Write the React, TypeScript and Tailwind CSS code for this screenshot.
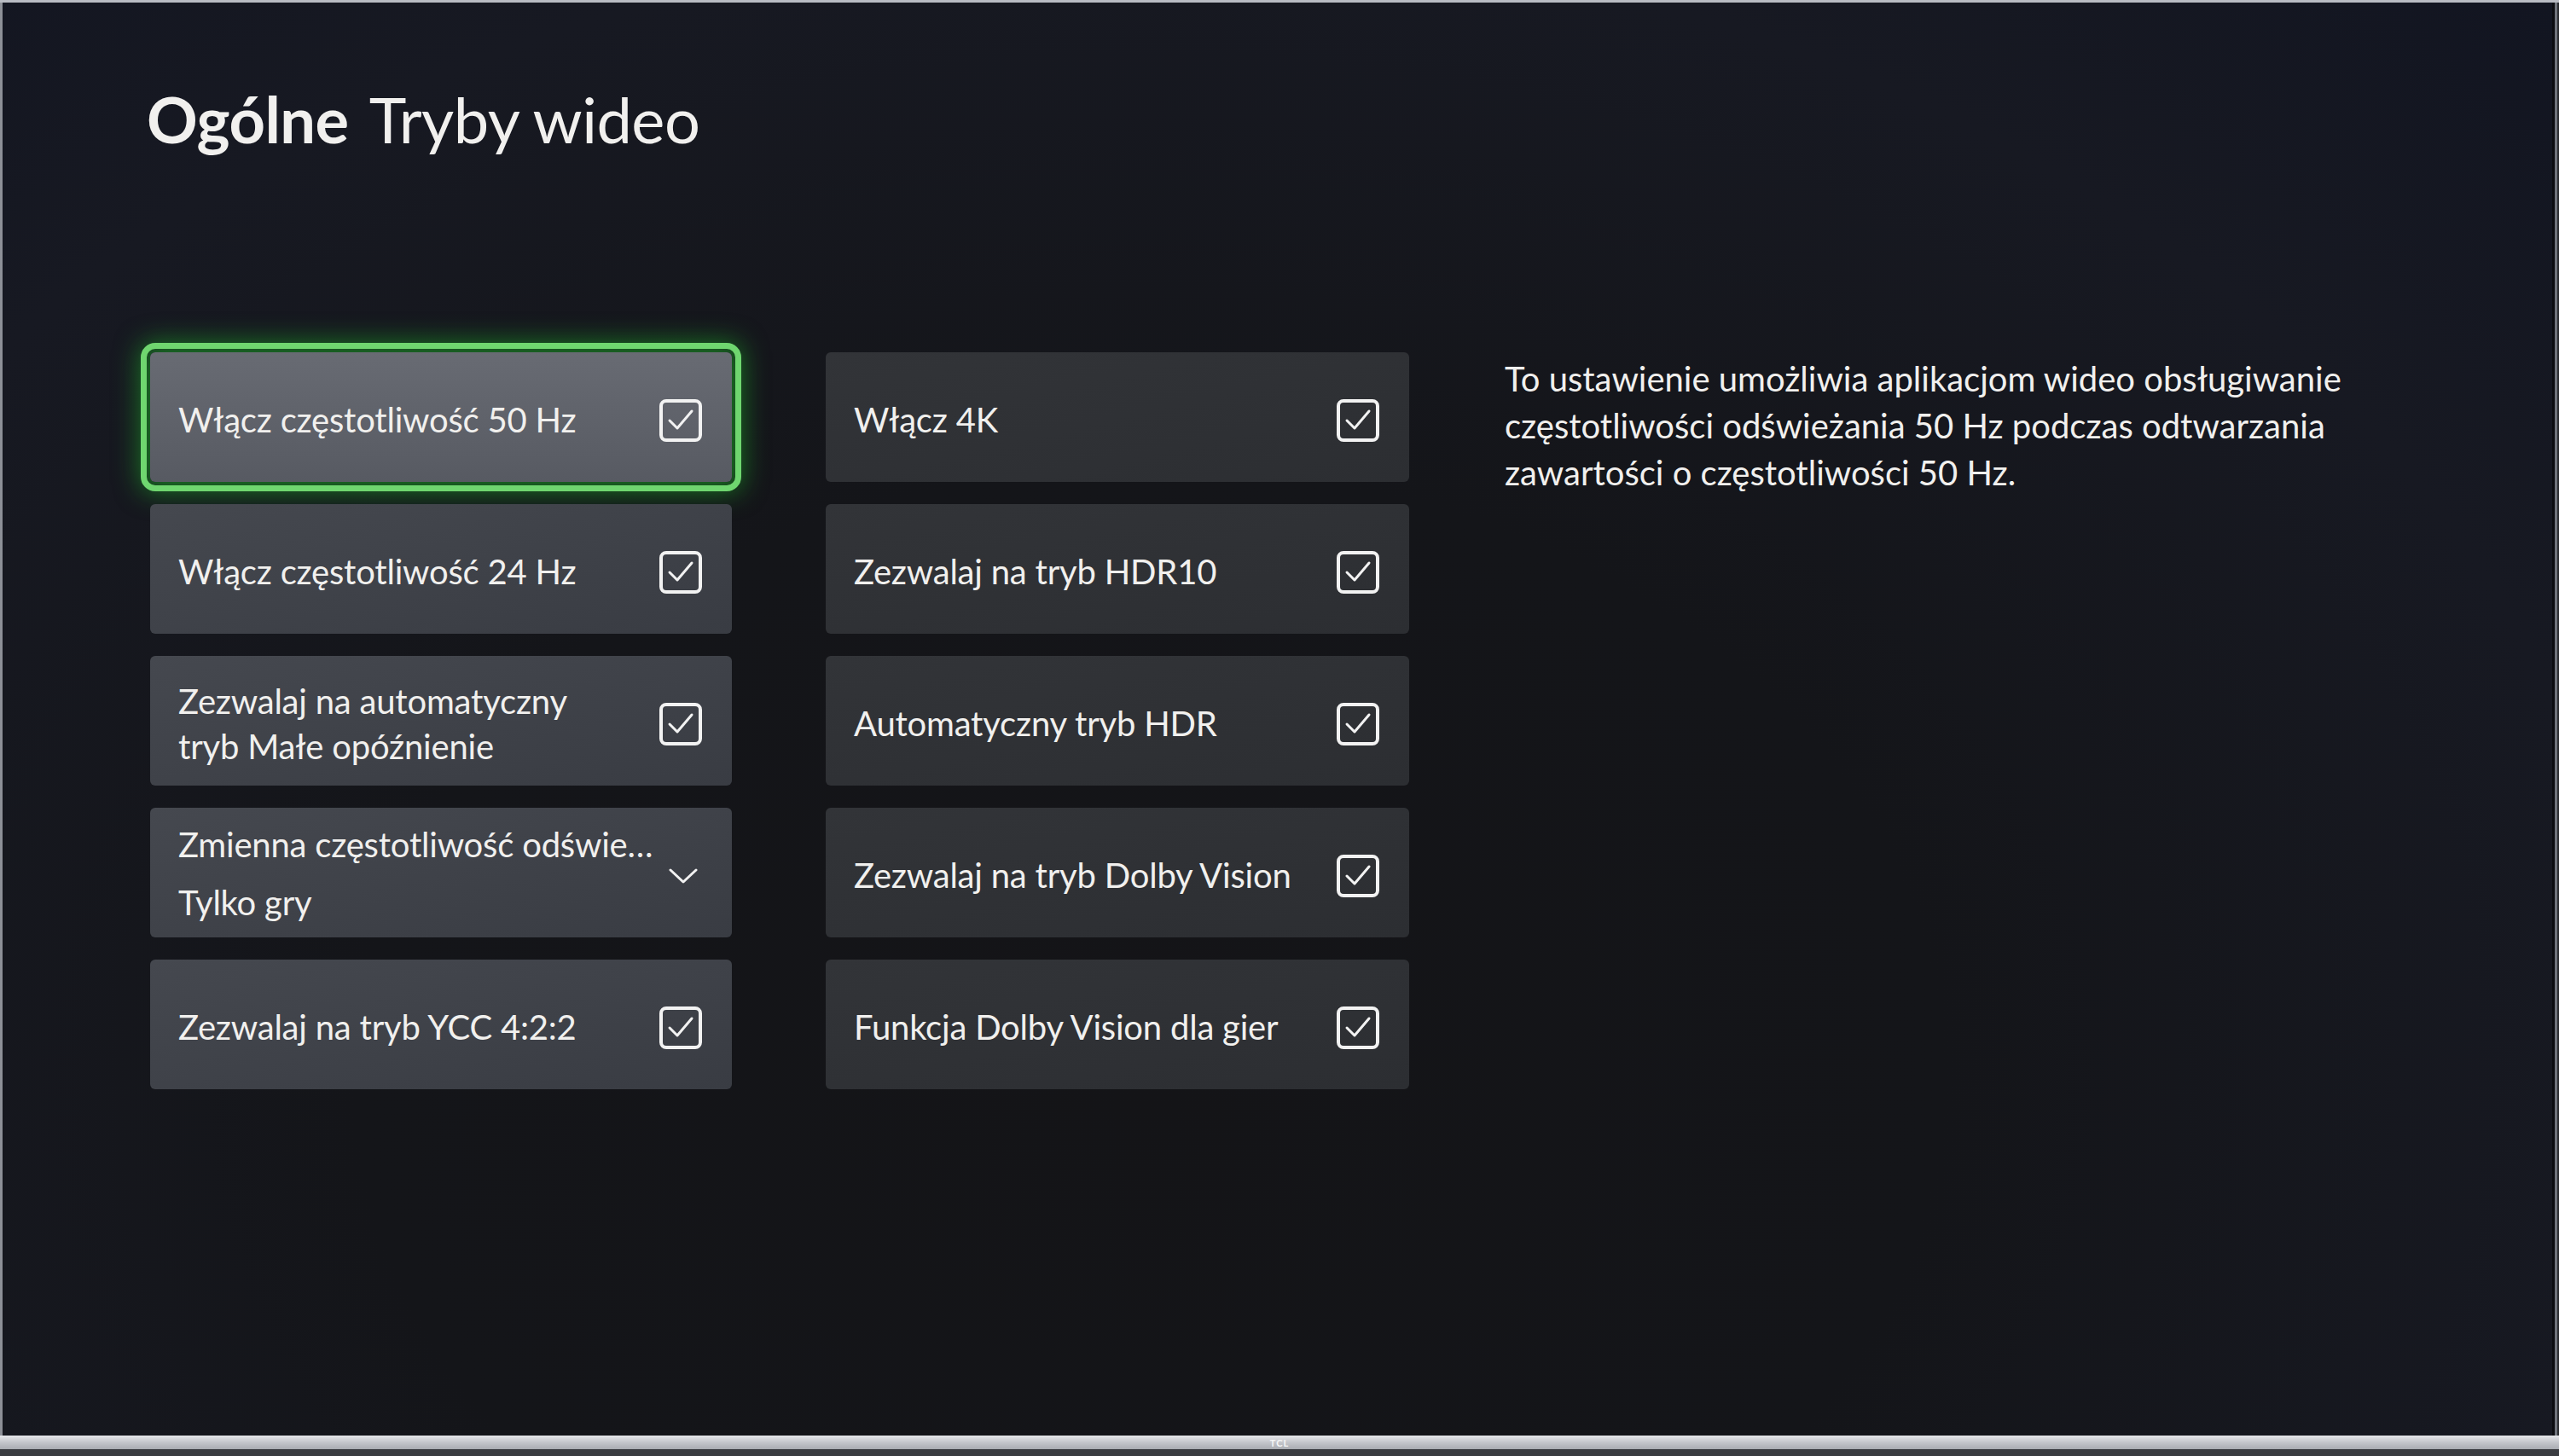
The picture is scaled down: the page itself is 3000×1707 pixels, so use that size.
import React from 'react';

type Row = {
  label: string;
  sub?: string;
  dropdown?: boolean;
  focused?: boolean;
};

const leftRows: Row[] = [
  { label: 'Włącz częstotliwość 50 Hz', focused: true },
  { label: 'Włącz częstotliwość 24 Hz' },
  { label: 'Zezwalaj na automatyczny\ntryb Małe opóźnienie' },
  { label: 'Zmienna częstotliwość odświeżania', sub: 'Tylko gry', dropdown: true },
  { label: 'Zezwalaj na tryb YCC 4:2:2' },
];

const rightRows: Row[] = [
  { label: 'Włącz 4K' },
  { label: 'Zezwalaj na tryb HDR10' },
  { label: 'Automatyczny tryb HDR' },
  { label: 'Zezwalaj na tryb Dolby Vision' },
  { label: 'Funkcja Dolby Vision dla gier' },
];

const CheckBox: React.FC = () => (
  <svg width="50" height="50" viewBox="0 0 50 50" className="shrink-0">
    <rect x="2" y="2" width="46" height="46" rx="6" fill="none" stroke="#f2f2f2" strokeWidth="4" />
    <path d="M12 25 L21 34 L38 14" fill="none" stroke="#f2f2f2" strokeWidth="3" strokeLinecap="round" strokeLinejoin="round" />
  </svg>
);

const Chevron: React.FC = () => (
  <svg width="34" height="20" viewBox="0 0 34 20" className="shrink-0">
    <path d="M2 3 L17 17 L32 3" fill="none" stroke="#f2f2f2" strokeWidth="3" strokeLinecap="round" strokeLinejoin="round" />
  </svg>
);

const Card: React.FC<{ row: Row; tone: 'left' | 'right' }> = ({ row, tone }) => {
  const bg = row.focused
    ? 'bg-gradient-to-b from-[#686b73] to-[#575a62] outline-[7px] outline-solid outline-[#6fd66f] outline-offset-[4px] shadow-[0_0_30px_12px_rgba(30,190,40,0.55)]'
    : tone === 'left'
      ? 'bg-gradient-to-br from-[#45484f] to-[#393c43]'
      : 'bg-gradient-to-br from-[#323438] to-[#2c2e32]';

  return (
    <div className={`h-[152px] rounded-[6px] flex items-center justify-between pt-[7px] pl-[33px] ${row.dropdown ? 'pr-[40px]' : 'pr-[35px]'} ${bg}`}>
      {row.dropdown ? (
        <div className="flex flex-col min-w-0 w-[562px] -mt-[6px]">
          <span className="truncate leading-[72px] -my-[2px]">{row.label}</span>
          <span className="leading-[72px] -my-[2px]">{row.sub}</span>
        </div>
      ) : (
        <span className="leading-[53px] max-w-[560px] whitespace-pre-line">{row.label}</span>
      )}
      {row.dropdown ? <Chevron /> : <CheckBox />}
    </div>
  );
};

const App: React.FC = () => {
  return (
    <div className="w-[3000px] h-[1707px] flex flex-col bg-black overflow-hidden font-['Lato','Noto_Sans',sans-serif] text-[#f1f0ee]">
      <div className="h-[3px] bg-[#b9bcc3]" />
      <div className="flex flex-1">
        <div className="w-[3px] bg-[#8d9097]" />
        <div className="flex-1 flex flex-col bg-[radial-gradient(ellipse_at_45%_75%,#141417_0%,#141519_40%,#171922_75%,#121521_100%)]">
          <h1 className="pl-[169px] pt-[90px] text-[74px] leading-[94px] tracking-[-0.5px]">
            <span className="font-bold">Ogólne</span>
            <span className="ml-[24px]">Tryby wideo</span>
          </h1>

          <div className="flex pl-[173px] pt-[226px] text-[40px] tracking-[-0.2px]">
            <div className="w-[682px] flex flex-col gap-[26px]">
              {leftRows.map((r) => (
                <Card key={r.label} row={r} tone="left" />
              ))}
            </div>
            <div className="w-[684px] ml-[110px] flex flex-col gap-[26px]">
              {rightRows.map((r) => (
                <Card key={r.label} row={r} tone="right" />
              ))}
            </div>
            <p className="ml-[112px] w-[1080px] pt-[4px] text-[40px] leading-[55px] tracking-normal">
              To ustawienie umożliwia aplikacjom wideo obsługiwanie częstotliwości odświeżania 50 Hz podczas
              odtwarzania zawartości o częstotliwości 50 Hz.
            </p>
          </div>
        </div>
        <div className="w-[8px] flex">
          <div className="w-[3px] bg-[#0b0c10]" />
          <div className="w-[3px] bg-[#6f737b]" />
          <div className="w-[2px] bg-[#2a2c30]" />
        </div>
      </div>
      <div className="h-[16px] bg-gradient-to-b from-[#e6e7ea] via-[#c4c6cb] to-[#a9acb2] flex items-center justify-center">
        <span className="text-[11px] leading-none font-bold tracking-[1px] text-[#f6f6f6]">TCL</span>
      </div>
      <div className="h-[8px] bg-[#3a3c41]" />
    </div>
  );
};

export default App;
